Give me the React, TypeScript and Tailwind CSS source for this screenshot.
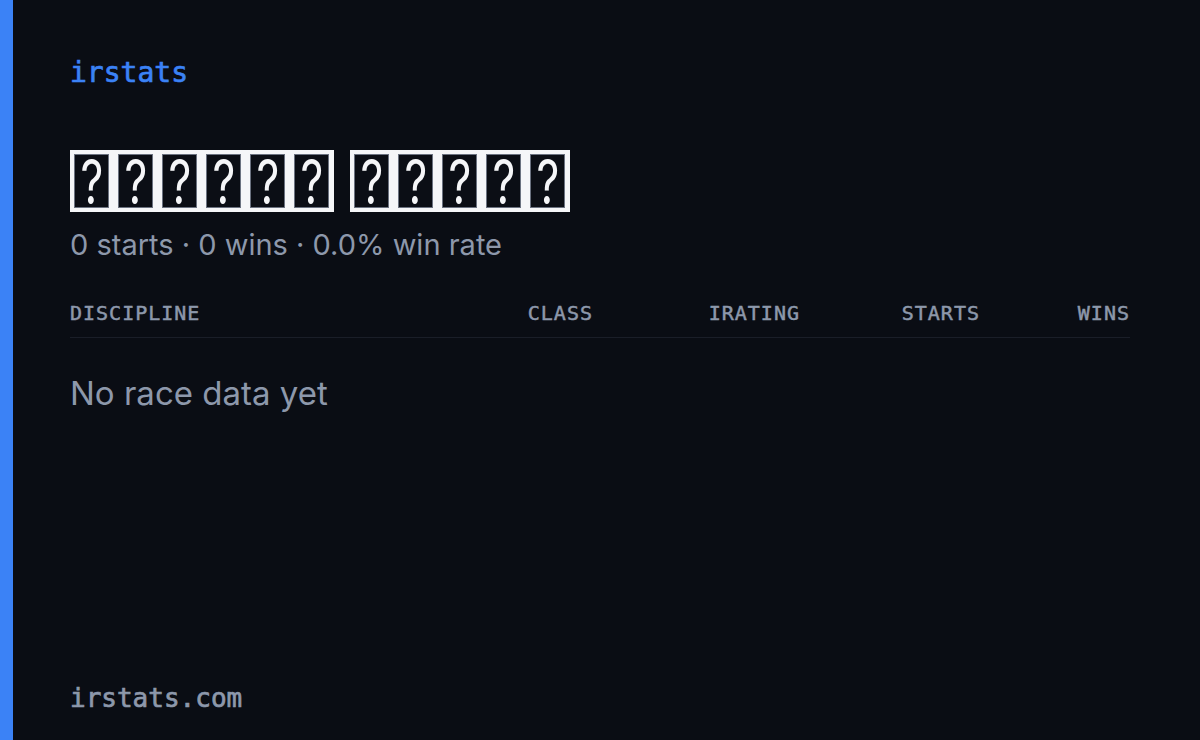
import React from "react";

const mono = { fontFamily: '"DejaVu Sans Mono", "Liberation Mono", monospace' };
const sans = { fontFamily: 'Inter, "Noto Sans", sans-serif' };

function Tofu({ n }: { n: number }) {
  return (
    <span className="flex bg-[#f5f6f8] pl-[4px] pr-[5px] py-[4px] gap-[9px]">
      {Array.from({ length: n }).map((_, i) => (
        <span
          key={i}
          className="w-[35px] h-[54px] bg-[#0b0e15] border border-[#6b7280] flex items-center justify-center"
        >
          <span
            className="block text-[#f5f6f8] text-[62px] leading-[52px] scale-x-[0.72] translate-y-[1px]"
            style={{ fontFamily: 'Inter, "Noto Sans", sans-serif', fontWeight: 400 }}
          >
            ?
          </span>
        </span>
      ))}
    </span>
  );
}

export default function App() {
  return (
    <div className="w-[1200px] h-[740px] flex bg-[#0a0d14] overflow-hidden">
      <div className="w-[13px] h-full bg-[#3b82f6]" />
      <div className="flex-1 flex flex-col pl-[57px] pr-[70px] pt-[56px] pb-[26px]">
        <div
          className="text-[28px] leading-[34px] font-normal [-webkit-text-stroke:0.7px] text-[#3b82f6]"
          style={mono}
        >
          irstats
        </div>
        <div className="mt-[60px] flex gap-[16px]">
          <Tofu n={6} />
          <Tofu n={5} />
        </div>
        <div className="mt-[15px] text-[29px] leading-[36px] text-[#8d98ab]" style={sans}>
          0 starts · 0 wins · 0.0% win rate
        </div>
        <div
          className="mt-[37px] flex items-center text-[20px] leading-[26px] tracking-[1px] font-normal [-webkit-text-stroke:0.5px] text-[#8d98ab] pb-[11px] border-b border-[#1a1e28]"
          style={mono}
        >
          <div className="flex-1">DISCIPLINE</div>
          <div className="w-[160px] text-right">CLASS</div>
          <div className="w-[207px] text-right">IRATING</div>
          <div className="w-[180px] text-right">STARTS</div>
          <div className="w-[150px] text-right">WINS</div>
        </div>
        <div className="mt-[35px] text-[33px] leading-[40px] text-[#8d98ab]" style={sans}>
          No race data yet
        </div>
        <div
          className="mt-auto text-[26px] leading-[32px] font-normal [-webkit-text-stroke:0.7px] text-[#8d98ab]"
          style={mono}
        >
          irstats.com
        </div>
      </div>
    </div>
  );
}
